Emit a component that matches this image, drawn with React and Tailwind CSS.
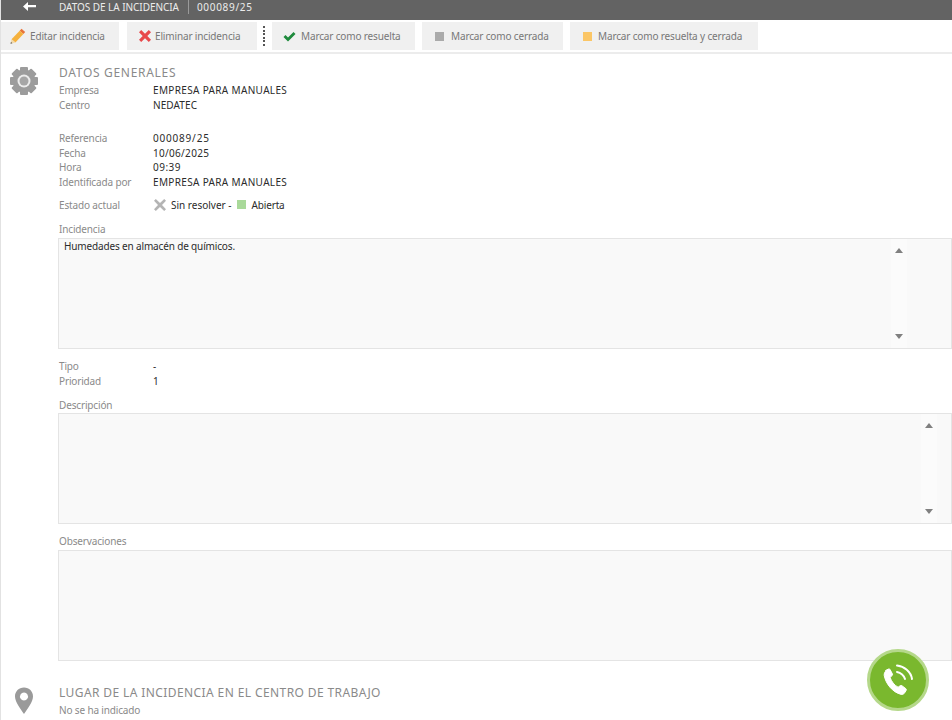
import React from "react";

const Gear = () => (
  <svg width="28" height="28" viewBox="0 0 28 28">
    <g fill="#9c9c9c">
      <circle cx="14" cy="14" r="11.5" />
      {[0, 45, 90, 135, 180, 225, 270, 315].map((a) => (
        <rect key={a} x="10" y="0" width="8" height="6" rx="1" transform={`rotate(${a} 14 14)`} />
      ))}
    </g>
    <circle cx="14" cy="14" r="6.5" fill="#ececec" />
    <circle cx="14" cy="14" r="4.5" fill="#a6a6a6" />
  </svg>
);

const Pin = () => (
  <svg width="20" height="28" viewBox="0 0 20 28" className="text-[#9a9a9a]">
    <path
      fill="currentColor"
      fillRule="evenodd"
      d="M10 0.5c5.2 0 9 3.9 9 8.9 0 5.5-5.4 12-9 17.6-3.6-5.6-9-12.1-9-17.6 0-5 3.8-8.9 9-8.9z M10 5.5a4 4 0 1 0 0.01 0z"
    />
  </svg>
);

const Pencil = () => (
  <svg width="16" height="16" viewBox="0 0 16 16">
    <path d="M11.5 0.8l3.7 3.3-1.8 2-3.7-3.4z" fill="#e8743b" />
    <path d="M9.7 2.7l3.7 3.4-8 8.4-3.9-3.3z" fill="#f5b13d" />
    <path d="M1.5 11.2l3.9 3.3-4.9 1.3z" fill="#f3d9a8" />
    <path d="M0.5 15.8l0.5-1.9 1.4 1.3z" fill="#555555" />
  </svg>
);

const RedCross = () => (
  <svg width="14" height="14" viewBox="0 0 14 14">
    <path d="M1 3.2l2.2-2.2 3.8 3.7 3.8-3.7 2.2 2.2-3.7 3.8 3.7 3.8-2.2 2.2-3.8-3.7-3.8 3.7-2.2-2.2 3.7-3.8z" fill="#e8484a" />
  </svg>
);

const Check = () => (
  <svg width="13" height="11" viewBox="0 0 13 11">
    <path d="M0.5 6l2-2 2.5 2.5 5.5-5.5 2 2-7.5 7.5z" fill="#1e8a3c" />
  </svg>
);

const GrayCross = () => (
  <svg width="14" height="14" viewBox="0 0 14 14">
    <path d="M1 2.8l1.8-1.8 4.2 4 4.2-4 1.8 1.8-4 4.2 4 4.2-1.8 1.8-4.2-4-4.2 4-1.8-1.8 4-4.2z" fill="#b4b4b4" />
  </svg>
);

const Scrollbar = () => (
  <div className="w-[16px] h-full flex flex-col items-center justify-between py-[9px] bg-[#fbfbfb]">
    <div className="w-0 h-0 border-x-[4px] border-x-transparent border-b-[5px] border-b-[#808080]" />
    <div className="w-0 h-0 border-x-[4px] border-x-transparent border-t-[5px] border-t-[#808080]" />
  </div>
);

const Row = ({ label, valueClass, children }) => (
  <div className="flex h-[14.7px] items-center">
    <span className="w-[94px] text-[#8a8a8a]">{label}</span>
    <span className={"text-[#2b2b2b] " + (valueClass || "")}>{children}</span>
  </div>
);

const Button = ({ icon, className, children }) => (
  <div className={"h-[28px] flex items-center bg-[#f0f0f0] text-[#777777] " + className}>
    {icon}
    <span>{children}</span>
  </div>
);

const TextBox = ({ children, className, scrollClass }) => (
  <div className={"relative -ml-px h-[111px] border border-[#e4e4e4] bg-[#f9f9f9] " + className}>
    {children && <p className="pl-[5px] pt-0 text-[#2b2b2b]">{children}</p>}
    {scrollClass && (
      <div className={"absolute top-0 bottom-0 " + scrollClass}>
        <Scrollbar />
      </div>
    )}
  </div>
);

export default function App() {
  return (
    <div className="relative h-[720px] w-[952px] overflow-hidden bg-white border-l border-[#e2e2e2] font-['Noto_Sans','Open_Sans',sans-serif] text-[10px] leading-[14px] tracking-[-0.15px]">
      <div className="h-[20px] flex items-start bg-[#636363] text-[#ececec]">
        <svg width="13" height="9" viewBox="0 0 13 9" className="ml-[22px] mt-[2px]">
          <path d="M5 0v3h8v2.3h-8v3.7l-5-4.5z" fill="#ffffff" />
        </svg>
        <span className="ml-[23px] tracking-[-0.05px]">DATOS DE LA INCIDENCIA</span>
        <span className="ml-[9px] w-px h-[14px] bg-[#9a9a9a]" />
        <span className="ml-[8px] tracking-[0.7px]">000089/25</span>
      </div>

      <div className="mt-[2px] h-[32px] border-b-2 border-[#ececec] flex">
        <Button className="w-[118px] pl-[9px] gap-[4px]" icon={<Pencil />}>Editar incidencia</Button>
        <Button className="ml-[8px] w-[130px] pl-[11px] gap-[3px]" icon={<RedCross />}>Eliminar incidencia</Button>
        <div className="ml-[5px] w-[3px] h-[28px] flex flex-col items-center justify-center gap-[1.5px]">
          {[0, 1, 2, 3, 4, 5].map((i) => (
            <span key={i} className="w-[2px] h-[2px] bg-[#555555]" />
          ))}
        </div>
        <Button className="ml-[7px] w-[143px] pl-[11px] gap-[5px]" icon={<Check />}>Marcar como resuelta</Button>
        <Button className="ml-[7px] w-[141px] pl-[13px] gap-[7px]" icon={<span className="w-[9px] h-[9px] bg-[#aaaaaa]" />}>Marcar como cerrada</Button>
        <Button className="ml-[7px] w-[188px] pl-[13px] gap-[6px]" icon={<span className="w-[9px] h-[9px] bg-[#fbc666]" />}>Marcar como resuelta y cerrada</Button>
      </div>

      <div className="flex pt-[12px]">
        <div className="w-[58px] shrink-0 pl-[9px] pt-[1px]">
          <Gear />
        </div>
        <div className="flex-1 min-w-0">
          <h2 className="text-[12px] leading-[14px] text-[#8a8a8a] tracking-[0.7px]">DATOS GENERALES</h2>
          <div className="mt-[3px]">
            <Row label="Empresa" valueClass="tracking-[0.34px]">EMPRESA PARA MANUALES</Row>
            <Row label="Centro" valueClass="tracking-[0.1px]">NEDATEC</Row>
          </div>
          <div className="mt-[18.4px]">
            <Row label="Referencia" valueClass="tracking-[0.8px]">000089/25</Row>
            <Row label="Fecha" valueClass="tracking-[0.3px]">10/06/2025</Row>
            <Row label="Hora" valueClass="tracking-[0.5px]">09:39</Row>
            <Row label="Identificada por" valueClass="tracking-[0.34px]">EMPRESA PARA MANUALES</Row>
          </div>
          <div className="mt-[7.6px] flex h-[15px] items-center">
            <span className="w-[94px] text-[#8a8a8a]">Estado actual</span>
            <GrayCross />
            <span className="ml-[4px] text-[#2b2b2b] tracking-[0px]">Sin resolver -</span>
            <span className="ml-[5px] w-[9px] h-[9px] bg-[#a9d99a]" />
            <span className="ml-[6px] text-[#2b2b2b]">Abierta</span>
          </div>
          <p className="mt-[10px] text-[#8a8a8a]">Incidencia</p>
          <TextBox className="mt-[2px]" scrollClass="right-[44px]">Humedades en almacén de químicos.</TextBox>
          <div className="mt-[10px]">
            <Row label="Tipo">-</Row>
            <Row label="Prioridad">1</Row>
          </div>
          <p className="mt-[10px] text-[#8a8a8a]">Descripción</p>
          <TextBox className="mt-[1px]" scrollClass="right-[14px]" />
          <p className="mt-[10px] text-[#8a8a8a]">Observaciones</p>
          <TextBox className="mt-[2px]" />
        </div>
      </div>

      <div className="flex mt-[25px]">
        <div className="w-[58px] shrink-0 pl-[13px] pt-[1px]">
          <Pin />
        </div>
        <div>
          <h2 className="text-[12px] leading-[14px] text-[#8a8a8a] tracking-[0.4px]">LUGAR DE LA INCIDENCIA EN EL CENTRO DE TRABAJO</h2>
          <p className="mt-[3px] text-[#8a8a8a]">No se ha indicado</p>
        </div>
      </div>

      {/* boton flotante de llamada */}
      <div className="absolute left-[866px] top-[649px] w-[62px] h-[62px] rounded-full bg-[#7ab82e] border-[3px] border-[#b5d88a] flex items-center justify-center">
        <svg width="32" height="32" viewBox="0 0 32 32" fill="none">
          <path
            transform="translate(-2 2)"
            d="M5.5 4.5l3-1.5c0.7-0.3 1.3 0 1.6 0.6l2.3 4.4c0.3 0.6 0.2 1.2-0.3 1.6l-2 1.7c1 3.8 4.4 8.2 8 9.9l2.1-1.5c0.5-0.4 1.2-0.4 1.7 0l4 3c0.5 0.4 0.6 1 0.3 1.6l-1.7 2.7c-0.7 1.1-2 1.7-3.3 1.4-8.5-2-15.5-10.5-17-19-0.2-1.9 0.7-4.1 2.3-4.9z"
            fill="#ffffff"
            stroke="#ffffff"
            strokeLinejoin="round"
          />
          <path d="M15 8c3.7 0.6 7.3 3.5 8 7" stroke="#ffffff" strokeWidth="2" strokeLinecap="round" />
          <path d="M15 1.5c7 0.8 14 6 15 13.5" stroke="#ffffff" strokeWidth="2" strokeLinecap="round" />
        </svg>
      </div>
    </div>
  );
}
